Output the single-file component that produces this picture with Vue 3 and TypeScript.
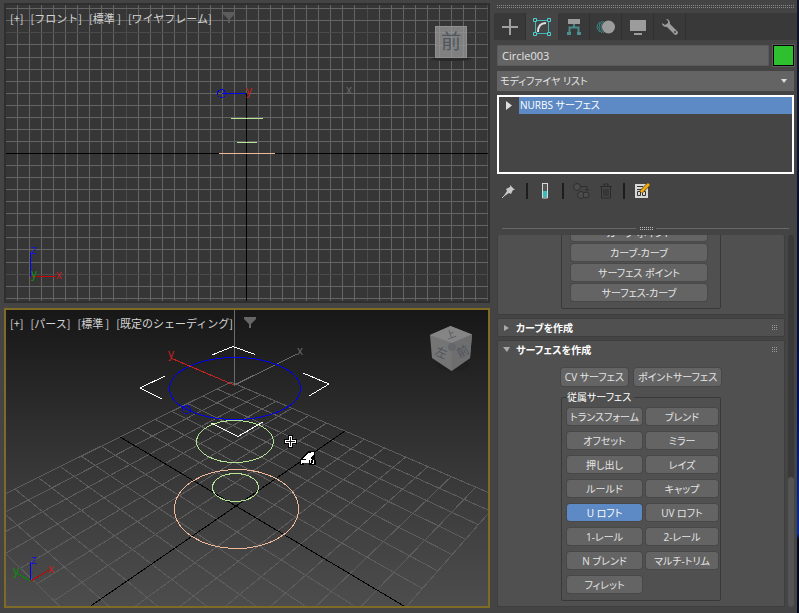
<script setup lang="ts">
import { ref } from 'vue'

interface Line { x1: number; y1: number; x2: number; y2: number; kind: string }

const objectName = ref('Circle003')
const modifier = ref('list')
const active = ref('U ロフト')

const pointTools = ['カーブ-ポイント', 'カーブ-カーブ', 'サーフェス ポイント', 'サーフェス-カーブ']
const surfaceTools = [
  'トランスフォーム', 'ブレンド', 'オフセット', 'ミラー', '押し出し', 'レイズ', 'ルールド', 'キャップ',
  'U ロフト', 'UV ロフト', '1-レール', '2-レール', 'N ブレンド', 'マルチ-トリム', 'フィレット',
]
const frontLabels = ['[+]', '[フロント]', '[標準 ]', '[ワイヤフレーム]']
const perspLabels = ['[+]', '[パース]', '[標準 ]', '[既定のシェーディング]']

// Orthographic grid: every tenth line is a major one, the origin lines are black.
const flat: Line[] = []
const order = (i: number) => (i === 0 ? 'axis' : i % 10 === 0 ? 'major' : 'minor')
for (let i = -19; i <= 20; i++) {
  const x = Math.round(246 + i * 12.05) + 0.5
  flat.push({ x1: x, y1: 5, x2: x, y2: 301, kind: order(i) })
}
for (let i = -12; i <= 12; i++) {
  const y = Math.round(153 + i * 12.06) + 0.5
  flat.push({ x1: 6, y1: y, x2: 488, y2: y, kind: order(i) })
}
flat.sort((a, b) => Number(a.kind === 'axis') - Number(b.kind === 'axis'))

// Ground plane seen in perspective, seven cells to each side of the origin.
const project = (u: number, v: number): [number, number] => {
  const w = 1 - 0.1888 * u + 0.2 * v
  return [(93.3 * u + 178 * v + 236) / w, (-13.4 * u + 11.2 * v + 506) / w]
}
const ground: Line[] = []
for (let i = -7; i <= 7; i++) {
  const t = i / 7
  const pairs = [[project(t, -1), project(t, 1)], [project(-1, t), project(1, t)]]
  for (const [a, b] of pairs) {
    ground.push({ x1: a[0], y1: a[1], x2: b[0], y2: b[1], kind: i === 0 ? 'axis' : 'floor' })
  }
}
ground.sort((a, b) => Number(a.kind === 'axis') - Number(b.kind === 'axis'))
</script>

<template>
  <div class="app">
    <main class="views">
      <section class="view front">
        <svg class="scene" viewBox="6 5 482 296" preserveAspectRatio="xMidYMid slice">
          <g shape-rendering="crispEdges">
            <line v-for="(l, i) in flat" :key="i" :x1="l.x1" :y1="l.y1" :x2="l.x2" :y2="l.y2" :class="l.kind" />
            <path d="M246.500 5V93" class="minor" />
            <path d="M231 118.500H263M237 142.500H257" class="green" />
            <path d="M219 153.500H275" class="peach" />
            <path d="M222 93.500H246" class="blue" />
            <path d="M30.500 252V277" class="blue" />
            <path d="M31 276.500H56" class="red" />
            <circle cx="221.500" cy="93.500" r="4" class="blue" />
          </g>
          <text x="246" y="95" class="mark tred">y</text>
          <text x="346" y="94" class="mark tgray">x</text>
          <text x="31" y="254" class="mark tblue">z</text>
          <text x="31" y="278" class="mark tgreen">y</text>
          <text x="56" y="279" class="mark tred">x</text>
          <ellipse cx="451" cy="59" rx="20" ry="2" fill="#292929" />
          <rect x="435.500" y="26.500" width="31" height="31" class="plate" />
          <path d="M439.500 27V57M451.500 27V57M463.500 27V57M436 32.500H466M436 45.500H466" stroke="#999" opacity=".5" />
          <text x="441" y="49" class="face big">前</text>
        </svg>
        <div class="labels">
          <button v-for="t in frontLabels" :key="t" type="button">{{ t }}</button>
          <button type="button" aria-label="フィルタ" class="funnel"><svg width="12" height="12" viewBox="0 0 12 12"><path d="M0 0H12V2L7 7V11H5V7L0 2Z" fill="#5c5c5c" /></svg></button>
        </div>
      </section>

      <section class="view persp">
        <svg class="scene" viewBox="6 310 482 296" preserveAspectRatio="xMidYMid slice">
          <g shape-rendering="crispEdges" fill="none">
            <line v-for="(l, i) in ground" :key="i" :x1="l.x1" :y1="l.y1" :x2="l.x2" :y2="l.y2" :class="l.kind" />
            <ellipse cx="236.500" cy="509" rx="62" ry="39.500" class="peach" />
            <ellipse cx="235.500" cy="487.500" rx="23" ry="14" class="green" />
            <ellipse cx="235" cy="441.500" rx="38.500" ry="21" class="green" />
            <path d="M234.500 310V385L297 354" class="guide" />
            <ellipse cx="235" cy="388.500" rx="65.500" ry="31" class="blue" />
            <circle cx="186.500" cy="409.500" r="4" class="blue" />
            <path d="M234 385L172 358.500" stroke="#c82222" />
            <path d="M212 355L233 346.500L255 354.500M165 376L140 388L162 399M303 373L329 384L309 396M211 423L238 436.500L263 422" stroke="#fff" />
            <path d="M30.500 562V581" class="blue" />
            <path d="M31 581L49 570" class="red" />
            <path d="M31 581L17 573.500" stroke="#008c00" />
          </g>
          <text x="168" y="358" class="mark tred">y</text>
          <text x="297" y="355" class="mark tgray">x</text>
          <text x="31" y="564" class="mark tblue">z</text>
          <text x="13" y="575" class="mark tgreen">y</text>
          <text x="48" y="573" class="mark tred">x</text>
          <ellipse cx="453" cy="365" rx="16" ry="6" fill="#1e1e1e" opacity=".6" />
          <path d="M450.500 326L472 334.500L470 358L451.500 371L432 358L430 335Z" fill="#757575" />
          <path d="M450.500 326L472 334.500L452 343L430 335Z" fill="#858585" />
          <path d="M452 343L472 334.500L470 358L451.500 371Z" fill="#6e6e6e" />
          <circle cx="452" cy="347" r="4" fill="#63676c" />
          <text x="446" y="338" class="face small" transform="rotate(-20 451 335)">上</text>
          <text x="435" y="357" class="face" transform="rotate(24 441 353)">左</text>
          <text x="457" y="356" class="face" transform="rotate(-28 462 352)">前</text>
          <g shape-rendering="crispEdges">
            <path d="M288 435H293V439H297V444H293V448H288V444H284V439H288Z" fill="#000" />
            <path d="M289 436H292V440H296V443H292V447H289V443H285V440H289Z" fill="#fff" />
            <path d="M290 437H291V441H295V442H291V446H290V442H286V441H290Z" fill="#222" />
            <path d="M300 465V460L303 456L308 451H315V460L316 461V465H309V463H304V465Z" fill="#000" />
            <path d="M302 459L308 453L314 452V454L311 458L312 460H309ZM301 460L309 460V463H303L301 464Z" fill="#fff" />
            <path d="M310 460H311V463H310ZM313 460H314V464H312V463H313Z" fill="#fff" />
          </g>
        </svg>
        <div class="labels">
          <button v-for="t in perspLabels" :key="t" type="button">{{ t }}</button>
          <button type="button" aria-label="フィルタ" class="funnel"><svg width="12" height="12" viewBox="0 0 12 12"><path d="M0 0H12V2L7 7V11H5V7L0 2Z" fill="#666" /></svg></button>
        </div>
      </section>
    </main>

    <aside class="panel">
      <div class="grip"></div>
      <nav class="tabs">
        <button type="button" aria-label="作成"><svg width="18" height="18" viewBox="0 0 18 18"><path d="M9 1V17M1 9H17" stroke="#a0a0a0" stroke-width="2" /></svg></button>
        <button type="button" aria-label="修正" class="on">
          <svg width="18" height="18" viewBox="0 0 18 18" fill="none"><path d="M4 2.500H14M4 15.500H14M2.500 4V14M15.500 4V14" stroke="#42b5b5" /><path d="M.5.500H3.500V3.500H.5ZM14.500.500H17.500V3.500H14.500ZM.5 14.500H3.500V17.500H.5ZM14.500 14.500H17.500V17.500H14.500Z" stroke="#4fd0d0" fill="#454545" /><path d="M5 14Q5 5 13 5" stroke="#e0e0e0" stroke-width="2" /></svg>
        </button>
        <button type="button" aria-label="階層"><svg width="16" height="18" viewBox="0 0 16 18"><path d="M2 1H14V6H2Z" fill="#9c9c9c" /><path d="M8 6V9M3.500 14V9.500H12.500V14" fill="none" stroke="#4a8a8a" stroke-width="2" /><path d="M1 14H5V17H1ZM11 14H15V17H11Z" fill="#4a9090" /></svg></button>
        <button type="button" aria-label="モーション"><svg width="20" height="18" viewBox="0 0 20 18"><circle cx="12.500" cy="9" r="6.500" fill="#9c9c9c" /><path d="M6 3Q0 9 6 15M8 3Q2 9 8 15M4 4Q-2 9 4 14" fill="none" stroke="#3e8585" /></svg></button>
        <button type="button" aria-label="表示"><svg width="18" height="18" viewBox="0 0 18 18"><path d="M1 2H17V13H1ZM5 15H13V17H5Z" fill="#9c9c9c" /></svg></button>
        <button type="button" aria-label="ユーティリティ"><svg width="18" height="18" viewBox="0 0 18 18"><path d="M5 1Q9 1 9 6L17 14Q17 17 14 17L6 9Q1 9 1 5L4 7L7 5V3Z" fill="#9c9c9c" /><path d="M13 13H15V15H13Z" fill="#555" /></svg></button>
      </nav>
      <div class="name-row">
        <input v-model="objectName" type="text" aria-label="オブジェクト名" />
        <button type="button" class="swatch" aria-label="オブジェクトカラー"></button>
      </div>
      <div class="picker">
        <select v-model="modifier" aria-label="モディファイヤ"><option value="list">モディファイヤ リスト</option></select>
      </div>
      <ul class="stack">
        <li><button type="button" class="expand" aria-label="展開"><svg width="6" height="9" viewBox="0 0 6 9"><path d="M0 0L6 4.500L0 9Z" fill="#ddd" /></svg></button><span>NURBS サーフェス</span></li>
      </ul>
      <div class="tools">
        <button type="button" aria-label="スタックを固定"><svg width="14" height="14" viewBox="0 0 14 14"><path d="M8 1L13 6L11 6L9 10L7 9L1 13L5 7L4 5L8 3Z" fill="#c8c8c8" /><path d="M0 14L5 9" stroke="#c8c8c8" /></svg></button>
        <i></i>
        <button type="button" aria-label="最終結果を表示"><svg width="8" height="16" viewBox="0 0 8 16"><path d="M1 .500H7M1.500 1V15H6.500V1" fill="#555" stroke="#d8d8d8" /><path d="M2 8H6V14H2Z" fill="#38bcbc" /></svg></button>
        <i></i>
        <button type="button" aria-label="固有にする"><svg width="17" height="16" viewBox="0 0 17 16" fill="#4c4c4c" stroke="#2e2e2e"><circle cx="4" cy="4" r="3.500" /><circle cx="8" cy="12" r="3.500" /><circle cx="13" cy="12" r="3" /><path d="M8 3.500H14V7M12 6L14 8L16 6" fill="none" /></svg></button>
        <button type="button" aria-label="モディファイヤを除去"><svg width="12" height="16" viewBox="0 0 12 16" fill="none" stroke="#2a2a2a"><path d="M0 3.500H12M4 3V1H8V3M1.500 4V15H10.500V4M4 6V13M6 6V13M8 6V13" /></svg></button>
        <i></i>
        <button type="button" aria-label="モディファイヤ セットを設定"><svg width="15" height="16" viewBox="0 0 15 16"><path d="M0 1H13V15H0Z" fill="#d8d8d8" /><path d="M2 3.500H8M2 6.500H7M2.500 8.500H5.500V12.500H2.500ZM7.500 8.500H10.500V12.500H7.500Z" fill="none" stroke="#333" /><path d="M6 9L14 1" stroke="#443300" stroke-width="4" /><path d="M6 9L14 1" stroke="#f3aa16" stroke-width="3" /></svg></button>
      </div>
      <div class="splitter"><span></span></div>

      <div class="rollouts">
        <div class="column">
          <section class="roll cut">
            <div class="box points"><button v-for="t in pointTools" :key="t" type="button" class="tool">{{ t }}</button></div>
          </section>
          <section class="roll">
            <button type="button" class="head"><svg width="7" height="8" viewBox="0 0 7 8"><path d="M1 1L6 4L1 7Z" fill="#aaa" /></svg><b>カーブを作成</b><span class="dots"></span></button>
          </section>
          <section class="roll open">
            <button type="button" class="head"><svg width="7" height="8" viewBox="0 0 7 8"><path d="M0 1H7L4 6Z" fill="#aaa" /></svg><b>サーフェスを作成</b><span class="dots"></span></button>
            <div class="top-tools">
              <button type="button" class="tool">CV サーフェス</button>
              <button type="button" class="tool">ポイントサーフェス</button>
            </div>
            <fieldset class="box">
              <legend>従属サーフェス</legend>
              <div class="pairs">
                <button v-for="t in surfaceTools" :key="t" type="button" class="tool" :class="{ active: active === t }" @click="active = t">{{ t }}</button>
              </div>
            </fieldset>
          </section>
        </div>
        <div class="bar"><div class="thumb"></div></div>
      </div>
    </aside>
    <div class="edge"></div>
  </div>
</template>

<style>
body { background: #444; }
</style>

<style scoped>
* { box-sizing: border-box; }
.app { display: grid; grid-template-columns: minmax(0, 1fr) 303px 2px; height: 100vh; min-height: 613px; background: #444; color: #e4e4e4; font-family: "Open Sans", "Noto Sans CJK JP", sans-serif; font-size: 11px; line-height: 16px; }
button, input, select { font: inherit; color: inherit; border: 0; margin: 0; padding: 0; background: none; }
svg { display: block; }
.views { display: grid; grid-template-rows: 1fr 1fr; gap: 5px; padding: 3px 4px 5px 4px; min-width: 0; }
.view { position: relative; border: 2px solid #2f2f2f; overflow: hidden; min-height: 0; }
.front { background: #363636; }
.persp { border-color: #7f6a26; background: linear-gradient(#171717, #353535 50%, #4d4d4d); }
.scene { width: 100%; height: 100%; }
.scene line, .scene path { stroke-width: 1; }
.minor { stroke: #646464; fill: none; }
.major { stroke: #4b4b4b; }
.axis { stroke: #000; }
.floor { stroke: #5d5d5d; }
.guide { stroke: #6c6c6c; }
.green { stroke: #b4e494; fill: none; }
.peach { stroke: #efb898; fill: none; }
.blue { stroke: #0000f0; fill: none; }
.red { stroke: #c80000; fill: none; }
.mark { font: 12px "Liberation Sans", sans-serif; }
.tred { fill: #c02020; }
.tgray { fill: #666; }
.tblue { fill: #1818c8; }
.tgreen { fill: #108c10; }
.plate { fill: #808080; stroke: #909090; }
.face { font: 12px "Noto Sans CJK JP", sans-serif; fill: #50565e; }
.big { font-size: 20px; }
.small { font-size: 10px; }
.labels { position: absolute; left: 4px; top: 5px; display: flex; align-items: center; gap: 7px; font-family: "Noto Sans CJK JP", sans-serif; color: #d4d4d4; white-space: nowrap; }
.funnel { margin-left: 4px; }

.panel { display: flex; flex-direction: column; min-width: 0; padding: 5px 3px 6px 0; font-size: 10px; }
.grip { height: 3px; margin: 0 0 5px 2px; background: conic-gradient(#999 25%, transparent 0) 0 0 / 2px 2px; opacity: .8; }
.tabs { display: flex; height: 27px; margin: 0 -3px 5px 0; background: #393939; }
.tabs button { width: 32px; display: grid; place-items: center; border-right: 1px solid #303030; }
.tabs .on { background: #454545; border: 0; }
.name-row { display: flex; gap: 4px; height: 21px; margin-bottom: 5px; padding-left: 3px; }
.name-row input { flex: 1; min-width: 0; padding-left: 4px; background: #646464; border: 1px solid #5a5a5a; border-radius: 1px; font-size: 11px; }
.swatch { width: 21px; background: #2ec02e; border: 1px solid #000; outline: 1px solid #5c5c5c; outline-offset: 0; }
.picker { position: relative; height: 20px; margin: 0 0 4px 3px; background: #646464; }
.picker select { width: 100%; height: 20px; appearance: none; padding-left: 3px; font-feature-settings: "palt"; }
.picker::after { content: ""; position: absolute; right: 7px; top: 8px; border: 3px solid transparent; border-top: 4px solid #ddd; border-bottom: 0; pointer-events: none; }
.stack { list-style: none; margin: 0 0 8px 3px; padding: 0; height: 79px; border: 2px solid #fff; background: #454545; }
.stack li { display: flex; height: 17px; }
.expand { width: 20px; display: grid; place-items: center; }
.stack span { flex: 1; background: #5d8ac4; padding-left: 1px; color: #fff; font-feature-settings: "palt"; }
.tools { display: flex; align-items: center; height: 18px; padding-left: 7px; gap: 9px; margin-bottom: 27px; }
.tools i { width: 2px; height: 16px; background: #1d1d1d; }
.tools button { width: 16px; display: grid; place-items: center; }
.splitter { display: flex; align-items: center; gap: 3px; height: 3px; margin: 0 5px 5px 8px; }
.splitter::before, .splitter::after { content: ""; flex: 1; height: 1px; background: #686868; }
.splitter span { width: 14px; height: 3px; background: conic-gradient(#bbb 25%, transparent 0) 0 0 / 2px 2px; }
.rollouts { flex: 1; min-height: 0; display: flex; gap: 3px; padding-left: 3px; }
.column { flex: 1; min-width: 0; display: flex; flex-direction: column; gap: 3px; }
.roll { background: #505050; border: 1px solid #3e3e3e; border-radius: 2px; }
.open { flex: 1; min-height: 0; }
.cut { height: 80px; overflow: hidden; display: flex; flex-direction: column; justify-content: flex-end; align-items: center; border-top: 0; padding-bottom: 5px; flex: none; }
.box { border: 1px solid #393939; border-radius: 2px; width: 160px; margin: 0 auto; }
.points { padding: 0 13px 7px 9px; display: grid; gap: 3px; flex: none; }
.head { display: flex; align-items: center; width: 100%; height: 17px; padding: 0 7px 0 5px; gap: 6px; text-align: left; }
.head b { flex: 1; color: #fff; font-feature-settings: "palt"; }
.dots { width: 6px; height: 6px; background: conic-gradient(#999 25%, transparent 0) 0 0 / 2px 2px; }
.tool { height: 17px; line-height: 16px; padding: 0; border-radius: 3px; background: #646464; box-shadow: 0 0 0 1px #484848; font-feature-settings: "palt"; white-space: nowrap; text-align: center; }
.top-tools { display: flex; justify-content: center; gap: 6px; padding: 10px 0 3px; }
.top-tools .tool { height: 18px; padding: 0 4px; }
fieldset.box { padding: 3px 2px 7px 5px; min-width: 0; }
legend { padding: 0 3px 0 0; font-feature-settings: "palt"; color: #fff; }
.pairs { display: grid; grid-template-columns: 75fr 72fr; gap: 7px 4px; }
.tool.active { background: #5d8ac4; color: #fff; }
.bar { width: 6px; background: #393939; border-radius: 3px; display: flex; flex-direction: column; justify-content: flex-end; }
.thumb { height: 35%; background: #545454; border-radius: 3px; }
.edge { background: linear-gradient(#10142a, #08102c 50%, #001060 65%, #0a2c9c 87%, #05071a 88%); }
</style>
